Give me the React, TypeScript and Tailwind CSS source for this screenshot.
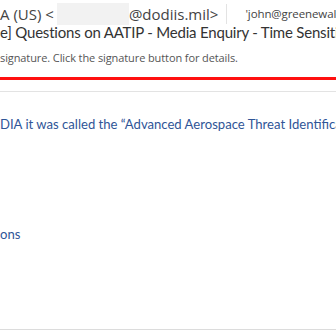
export default function App() {
  return (
    <div className="w-[336px] h-[336px] overflow-hidden bg-white font-['Open_Sans',sans-serif] text-[#444]">
      <div className="flex items-center h-[20px] mt-[4px] whitespace-nowrap">
        <span className="shrink-0 text-[15px] leading-none">A (US) &lt;</span>
        <span className="shrink-0 w-[72px] h-[22px] bg-[#f2f2f2] ml-[3px]" />
        <span className="shrink-0 text-[15px] leading-none">@dodiis.mil&gt;</span>
        <span className="shrink-0 w-px h-[20px] bg-[#e3e3e3] ml-[8px] mr-[18px]" />
        <span className="shrink-0 text-[11.5px] leading-none tracking-[-0.1px]">'john@greenewald.com'</span>
      </div>
      <div className="h-[20px] -mt-[2px] font-['Lato',sans-serif] text-[15px] leading-[20px] tracking-[-0.2px] text-[#333] whitespace-nowrap overflow-hidden">
        e] Questions on AATIP - Media Enquiry - Time Sensitive
      </div>
      <div className="h-[16px] mt-[8px] text-[11px] leading-[16px] text-[#555] whitespace-nowrap tracking-[-0.1px]">
        signature. Click the signature button for details.
      </div>
      <div className="h-[3px] bg-[#ff1010] mt-[11px]" />
      <div className="h-px bg-[#e3e3e3] mt-[11px]" />
      <div className="pt-[24px] font-['Lato',sans-serif] text-[13.1px] leading-[16px] text-[#2f5597] whitespace-nowrap overflow-hidden">
        <p>DIA it was called the “Advanced Aerospace Threat Identification Program”</p>
        <p className="mt-[94px]">ons</p>
      </div>
      <div className="h-px bg-[#dcdcdc] mt-[87px]" />
    </div>
  )
}
